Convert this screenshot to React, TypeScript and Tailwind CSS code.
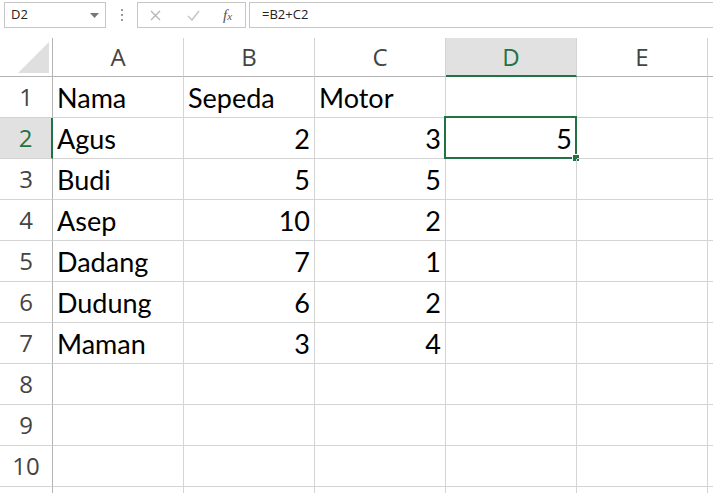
import React from "react";

const cols = ["A", "B", "C", "D", "E"];
const data: (string | number | null)[][] = [
  ["Nama", "Sepeda", "Motor", null, null],
  ["Agus", 2, 3, 5, null],
  ["Budi", 5, 5, null, null],
  ["Asep", 10, 2, null, null],
  ["Dadang", 7, 1, null, null],
  ["Dudung", 6, 2, null, null],
  ["Maman", 3, 4, null, null],
  [null, null, null, null, null],
  [null, null, null, null, null],
  [null, null, null, null, null],
];

const hdrFont = { fontFamily: '"Open Sans", "DejaVu Sans", sans-serif' };
const cellFont = { fontFamily: 'Lato, "Liberation Sans", sans-serif' };

export default function App() {
  return (
    <div className="w-[713px] h-[493px] overflow-hidden bg-white relative">
      {/* toolbar */}
      <div className="h-[38px] flex items-start pt-[2px]" style={hdrFont}>
        <div className="ml-[4px] w-[102px] h-[26px] border border-[#c6c6c6] flex items-center justify-between pl-[6px] pr-[6px] text-[13px] text-[#222]">
          <span>D2</span>
          <svg width="9" height="5" viewBox="0 0 9 5"><path d="M0 0h9L4.5 5z" fill="#777" /></svg>
        </div>
        <div className="w-[31px] h-[26px] flex flex-col items-center justify-center gap-[3px]">
          <div className="w-[2px] h-[2px] bg-[#999]" />
          <div className="w-[2px] h-[2px] bg-[#999]" />
          <div className="w-[2px] h-[2px] bg-[#999]" />
        </div>
        <div className="w-[109px] h-[26px] border border-[#c6c6c6] flex items-center">
          <svg className="ml-[12px]" width="11" height="11" viewBox="0 0 11 11"><path d="M1 1l9 9M10 1l-9 9" stroke="#b5b5b5" strokeWidth="1.3" /></svg>
          <svg className="ml-[26px]" width="13" height="11" viewBox="0 0 13 11"><path d="M1 6l4 4 7-9" stroke="#c8c8c8" strokeWidth="1.6" fill="none" /></svg>
          <span className="ml-[23px] text-[15px] italic text-[#555]" style={{ fontFamily: '"Liberation Serif", serif' }}>
            f<span className="text-[11px]">x</span>
          </span>
        </div>
        <div className="ml-[3px] flex-1 h-[26px] border-t border-b border-l border-[#c6c6c6] flex items-center pl-[12px] text-[13px] text-[#222]">
          =B2+C2
        </div>
      </div>

      {/* grid */}
      <div className="grid grid-cols-[53px_repeat(5,131px)_1fr] grid-rows-[39px_repeat(10,41px)_1fr] h-[455px]">
        {/* corner */}
        <div className="border-r border-b border-[#b4b4b4] flex items-end justify-end pr-[3px] pb-[3px] bg-white">
          <svg width="31" height="31" viewBox="0 0 31 31"><path d="M31 0V31H0z" fill="#dfdfdf" /></svg>
        </div>
        {cols.map((c) => {
          const sel = c === "D";
          return (
            <div
              key={c}
              className={
                sel
                  ? "bg-[#e1e1e1] border-r border-[#d4d4d4] border-b-2 border-b-[#217346] flex items-center justify-center text-[24px] text-[#217346]"
                  : "bg-white border-r border-[#d4d4d4] border-b border-b-[#b4b4b4] flex items-center justify-center text-[24px] text-[#444]"
              }
              style={hdrFont}
            >
              {c}
            </div>
          );
        })}
        <div className="border-b border-b-[#b4b4b4]" />

        {data.map((row, ri) => (
          <React.Fragment key={ri}>
            <div
              className={
                ri === 1
                  ? "bg-[#e1e1e1] border-r-2 border-r-[#217346] border-b border-[#d4d4d4] flex items-center justify-center text-[24px] text-[#217346]"
                  : "bg-white border-r border-r-[#b4b4b4] border-b border-[#d4d4d4] flex items-center justify-center text-[24px] text-[#444]"
              }
              style={hdrFont}
            >
              {ri + 1}
            </div>
            {row.map((v, ci) => {
              const num = typeof v === "number";
              const isSel = ri === 1 && ci === 3;
              return (
                <div
                  key={ci}
                  className={
                    "border-r border-b border-[#d4d4d4] flex items-end pb-[6px] text-[27px] text-black relative " +
                    (num ? "justify-end pr-[4px]" : "justify-start pl-[4px]")
                  }
                  style={cellFont}
                >
                  {v !== null ? <span className="leading-none">{v}</span> : null}
                  {isSel && (
                    <>
                      <div className="absolute left-[-2px] top-[-2px] right-[-1px] bottom-[-1px] border-2 border-[#217346] pointer-events-none" />
                      <div className="absolute right-[-4px] bottom-[-4px] w-[6px] h-[6px] bg-[#217346] border border-white box-content" />
                    </>
                  )}
                </div>
              );
            })}
            <div className="border-b border-[#d4d4d4]" />
          </React.Fragment>
        ))}
        {/* partial row 11 */}
        <div className="border-r border-r-[#b4b4b4]" />
        {cols.map((c) => (
          <div key={c} className="border-r border-[#d4d4d4]" />
        ))}
        <div />
      </div>
    </div>
  );
}
